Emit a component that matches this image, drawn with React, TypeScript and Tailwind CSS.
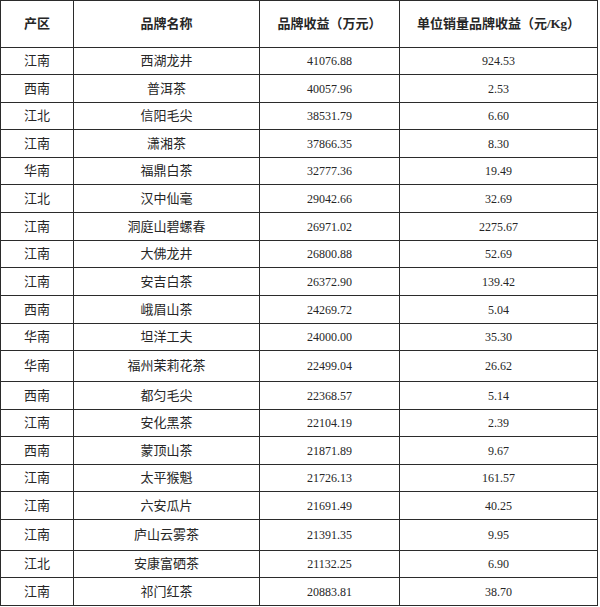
import React from "react";

type Row = { area: string; name: string; income: string; unit: string; h: string };

const rows: Row[] = [
  { area: "江南", name: "西湖龙井", income: "41076.88", unit: "924.53", h: "h-[27px]" },
  { area: "西南", name: "普洱茶", income: "40057.96", unit: "2.53", h: "h-[28px]" },
  { area: "江北", name: "信阳毛尖", income: "38531.79", unit: "6.60", h: "h-[27px]" },
  { area: "江南", name: "潇湘茶", income: "37866.35", unit: "8.30", h: "h-[28px]" },
  { area: "华南", name: "福鼎白茶", income: "32777.36", unit: "19.49", h: "h-[27px]" },
  { area: "江北", name: "汉中仙毫", income: "29042.66", unit: "32.69", h: "h-[28px]" },
  { area: "江南", name: "洞庭山碧螺春", income: "26971.02", unit: "2275.67", h: "h-[28px]" },
  { area: "江南", name: "大佛龙井", income: "26800.88", unit: "52.69", h: "h-[27px]" },
  { area: "江南", name: "安吉白茶", income: "26372.90", unit: "139.42", h: "h-[28px]" },
  { area: "西南", name: "峨眉山茶", income: "24269.72", unit: "5.04", h: "h-[28px]" },
  { area: "华南", name: "坦洋工夫", income: "24000.00", unit: "35.30", h: "h-[27px]" },
  { area: "华南", name: "福州茉莉花茶", income: "22499.04", unit: "26.62", h: "h-[31px]" },
  { area: "西南", name: "都匀毛尖", income: "22368.57", unit: "5.14", h: "h-[28px]" },
  { area: "江南", name: "安化黑茶", income: "22104.19", unit: "2.39", h: "h-[27px]" },
  { area: "西南", name: "蒙顶山茶", income: "21871.89", unit: "9.67", h: "h-[28px]" },
  { area: "江南", name: "太平猴魁", income: "21726.13", unit: "161.57", h: "h-[27px]" },
  { area: "江南", name: "六安瓜片", income: "21691.49", unit: "40.25", h: "h-[28px]" },
  { area: "江南", name: "庐山云雾茶", income: "21391.35", unit: "9.95", h: "h-[31px]" },
  { area: "江北", name: "安康富硒茶", income: "21132.25", unit: "6.90", h: "h-[27px]" },
  { area: "江南", name: "祁门红茶", income: "20883.81", unit: "38.70", h: "h-[28px]" },
];

const cell = "flex items-center justify-center border-r border-[#2b2b2b]";

export default function App() {
  return (
    <div className="w-[600px] h-[607px] bg-white">
      <div
        className="w-[598px] border-l border-t border-[#2b2b2b] text-[#262626]"
        style={{ fontFamily: '"Liberation Serif", "Noto Sans CJK SC", serif' }}
      >
        <div className="flex h-[47px] border-b border-[#2b2b2b] text-[13px] font-bold">
          <div className={`${cell} w-[73px]`}>产区</div>
          <div className={`${cell} w-[186px]`}>品牌名称</div>
          <div className={`${cell} w-[140px]`}>品牌收益（万元）</div>
          <div className={`${cell} w-[198px]`}>单位销量品牌收益（元/Kg）</div>
        </div>
        {rows.map((r, i) => (
          <div key={i} className={`flex ${r.h} border-b border-[#2b2b2b]`}>
            <div className={`${cell} w-[73px] text-[13px]`}>{r.area}</div>
            <div className={`${cell} w-[186px] text-[13px]`}>{r.name}</div>
            <div className={`${cell} w-[140px] text-[12px]`}>{r.income}</div>
            <div className={`${cell} w-[198px] text-[12px]`}>{r.unit}</div>
          </div>
        ))}
      </div>
    </div>
  );
}
